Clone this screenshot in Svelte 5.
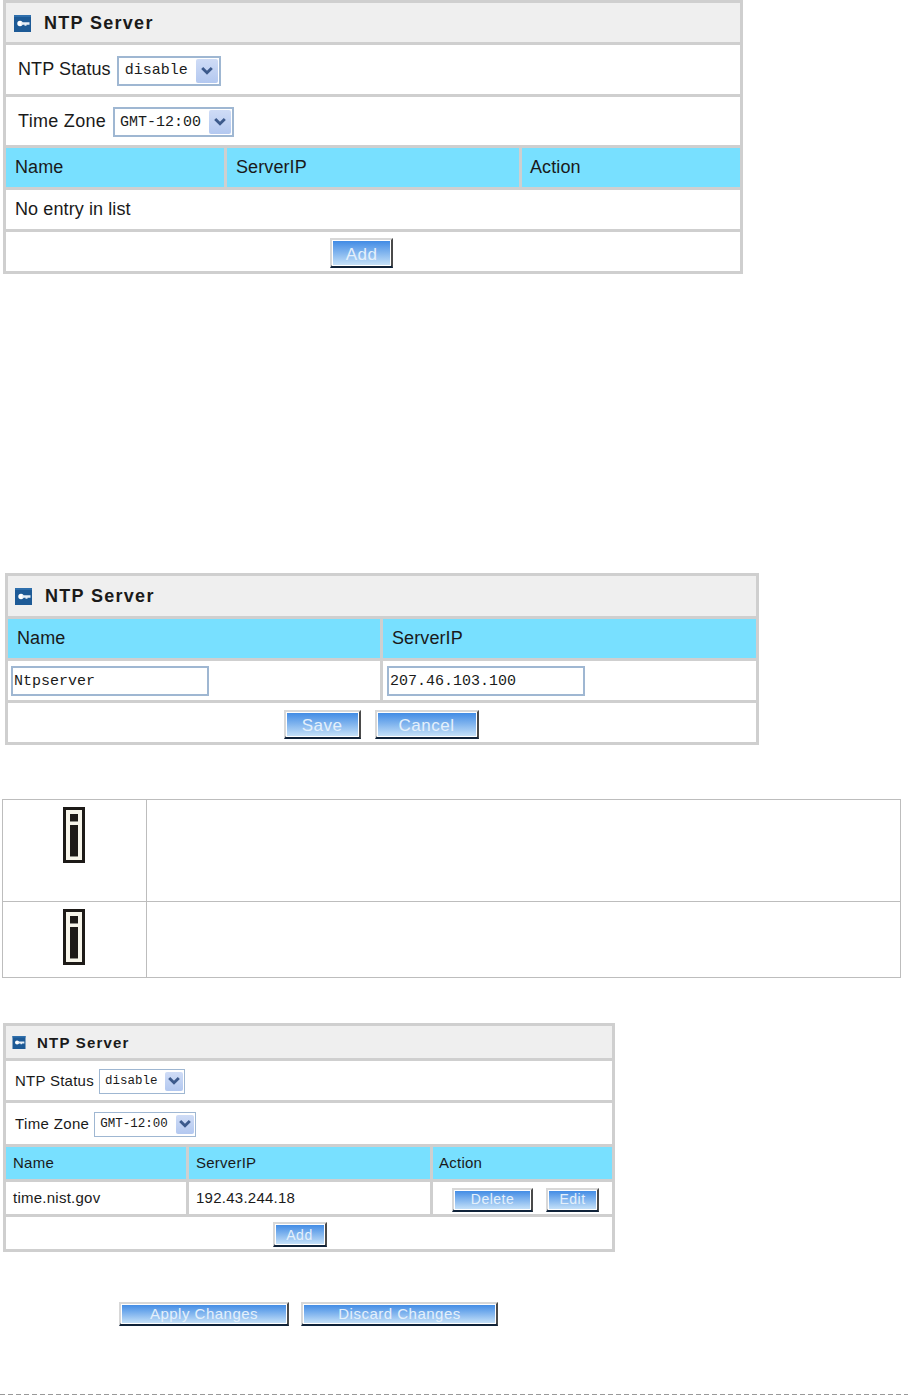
{#snippet logo(w, h)}
  <svg class="logo" width={w} height={h} viewBox="0 0 17 17">
    <rect width="17" height="17" fill="#1d5a96" />
    <rect width="17" height="2" fill="#2f6fac" />
    <circle cx="6" cy="8.500" r="2.700" fill="#fff" />
    <path d="M7 7.200h8.500v2.600h-3v1h-2v-1h-3.500z" fill="#e6eef6" />
  </svg>
{/snippet}

{#snippet selectBox(text)}
  <span class="select">
    <span class="value">{text}</span>
    <span class="arrow">
      <svg viewBox="0 0 10 8"><path d="M1 1.500l4 4 4-4" fill="none" stroke="#3c5a8c" stroke-width="2.400" /></svg>
    </span>
  </span>
{/snippet}

{#snippet info()}
  <svg class="info" width="22" height="56" viewBox="0 0 22 56">
    <rect x="1.500" y="1.500" width="19" height="53" fill="#f7f5ea" stroke="#1d1a17" stroke-width="3" />
    <rect x="7" y="7" width="8" height="8" fill="#8f8d86" />
    <rect x="7" y="7" width="8" height="7" fill="#1d1a17" />
    <rect x="7" y="18" width="8" height="32" fill="#8f8d86" />
    <rect x="7" y="18" width="8" height="31" fill="#1d1a17" />
  </svg>
{/snippet}

<div class="page">
  <section class="panel first">
    <div class="title">{@render logo(17, 17)}<span>NTP Server</span></div>
    <div class="row form status"><span>NTP Status</span>{@render selectBox('disable')}</div>
    <div class="row form zone"><span>Time Zone</span>{@render selectBox('GMT-12:00')}</div>
    <div class="row head cols-a">
      <div>Name</div>
      <div>ServerIP</div>
      <div>Action</div>
    </div>
    <div class="row plain">No entry in list</div>
    <div class="row buttons"><button class="add">Add</button></div>
  </section>

  <section class="panel second">
    <div class="title">{@render logo(17, 17)}<span>NTP Server</span></div>
    <div class="row head cols-b">
      <div>Name</div>
      <div>ServerIP</div>
    </div>
    <div class="row cols-b inputs">
      <div><span class="input">Ntpserver</span></div>
      <div><span class="input">207.46.103.100</span></div>
    </div>
    <div class="row buttons gap">
      <button class="save">Save</button>
      <button class="cancel">Cancel</button>
    </div>
  </section>

  <div class="notes">
    <div class="note tall">
      <div class="icon-cell">{@render info()}</div>
      <div></div>
    </div>
    <div class="note short">
      <div class="icon-cell">{@render info()}</div>
      <div></div>
    </div>
  </div>

  <section class="panel third">
    <div class="title">{@render logo(14, 13)}<span>NTP Server</span></div>
    <div class="row form status"><span>NTP Status</span>{@render selectBox('disable')}</div>
    <div class="row form zone"><span>Time Zone</span>{@render selectBox('GMT-12:00')}</div>
    <div class="row head cols-c">
      <div>Name</div>
      <div>ServerIP</div>
      <div>Action</div>
    </div>
    <div class="row cols-c entry">
      <div>time.nist.gov</div>
      <div>192.43.244.18</div>
      <div class="actions">
        <button class="delete">Delete</button>
        <button class="edit">Edit</button>
      </div>
    </div>
    <div class="row buttons"><button class="add">Add</button></div>
  </section>

  <div class="bottom">
    <button class="apply">Apply Changes</button>
    <button class="discard">Discard Changes</button>
  </div>

  <div class="dashed"></div>
</div>

<style>
  :global(body) {
    margin: 0;
    background: #fff;
  }
  .page {
    width: 908px;
    height: 1397px;
    overflow: hidden;
    font-family: "Liberation Sans", Arial, sans-serif;
    color: #1a1a1a;
  }
  .panel {
    box-sizing: border-box;
    border: 3px solid #cfcfcf;
    background: #fff;
    font-size: 18px;
    letter-spacing: 0.1px;
  }
  .first {
    width: 740px;
    height: 274px;
    margin-left: 3px;
  }
  .second {
    width: 754px;
    height: 172px;
    margin: 299px 0 0 5px;
  }
  .third {
    width: 612px;
    height: 229px;
    margin: 45px 0 0 3px;
    font-size: 15px;
    letter-spacing: 0.25px;
  }
  .title {
    display: flex;
    align-items: center;
    box-sizing: border-box;
    gap: 13px;
    height: 39px;
    padding: 1px 0 0 8px;
    background: #efefef;
    font-weight: bold;
    letter-spacing: 1.3px;
  }
  .second .title {
    height: 40px;
    padding-left: 7px;
  }
  .third .title {
    height: 32px;
    gap: 11px;
    padding-left: 6px;
    letter-spacing: 1.2px;
  }
  .logo {
    flex: none;
  }
  .row {
    border-top: 3px solid #cfcfcf;
    box-sizing: border-box;
  }
  .form {
    display: flex;
    align-items: center;
    padding-left: 12px;
    gap: 6px;
  }
  .first .status {
    height: 52px;
  }
  .first .zone {
    height: 51px;
    gap: 7px;
    letter-spacing: 0.3px;
  }
  .third .form {
    padding-left: 9px;
    gap: 5px;
  }
  .third .status {
    height: 42px;
  }
  .third .zone {
    height: 44px;
    letter-spacing: 0.35px;
  }
  .head {
    background: #78e0ff;
    height: 42px;
  }
  .third .head {
    height: 35px;
  }
  .cols-a,
  .cols-b,
  .cols-c {
    display: grid;
  }
  .cols-a {
    grid-template-columns: 218px 295px 1fr;
  }
  .cols-b {
    grid-template-columns: 372px 1fr;
  }
  .cols-c {
    grid-template-columns: 180px 244px 1fr;
  }
  .cols-a > div,
  .cols-b > div,
  .cols-c > div {
    display: flex;
    align-items: center;
    padding-left: 9px;
  }
  .cols-a > div:nth-child(3) {
    padding-left: 8px;
  }
  .third .cols-c > div {
    padding-left: 7px;
    padding-bottom: 1px;
  }
  .third .cols-c > div:nth-child(3) {
    padding-left: 6px;
  }
  .cols-a > div + div,
  .cols-b > div + div,
  .cols-c > div + div {
    border-left: 3px solid #cfcfcf;
  }
  .plain {
    display: flex;
    align-items: center;
    height: 42px;
    padding-left: 9px;
  }
  .inputs {
    height: 42px;
  }
  .cols-b.inputs > div {
    padding-left: 3px;
  }
  .cols-b.inputs > div + div {
    padding-left: 4px;
  }
  .entry {
    height: 35px;
  }
  .buttons {
    display: flex;
    justify-content: center;
    align-items: center;
    height: 42px;
    padding-top: 3px;
  }
  .first .buttons {
    padding-right: 23px;
  }
  .second .buttons {
    padding-right: 2px;
  }
  .third .buttons {
    height: 35px;
    padding-right: 19px;
  }
  .gap {
    gap: 14px;
  }
  .select {
    display: inline-flex;
    align-items: center;
    justify-content: space-between;
    box-sizing: border-box;
    height: 30px;
    margin-top: 2px;
    border: 2px solid #9fb7d2;
    padding: 0 1px 0 6px;
    background: #fff;
    font-family: "Liberation Mono", monospace;
    letter-spacing: 0;
  }
  .value {
    font-size: 15px;
    white-space: nowrap;
  }
  .status .select {
    width: 104px;
  }
  .zone .select {
    width: 121px;
    padding-left: 5px;
  }
  .third .select {
    height: 25px;
    margin-top: 1px;
    border-width: 1.500px;
    padding-left: 5px;
  }
  .third .status .select {
    width: 86px;
  }
  .third .zone .select {
    width: 102px;
  }
  .third .value {
    font-size: 12.500px;
  }
  .arrow {
    display: flex;
    align-items: center;
    justify-content: center;
    width: 22px;
    height: 24px;
    flex: none;
    border-radius: 2px;
    background: linear-gradient(#cfdcf6, #b3c8f0);
  }
  .third .arrow {
    width: 18px;
    height: 19px;
  }
  .arrow svg {
    width: 12px;
    height: 10px;
  }
  .input {
    display: flex;
    align-items: center;
    box-sizing: border-box;
    width: 198px;
    height: 30px;
    margin-top: 1px;
    border: 2px solid #9fb7d2;
    padding: 1px 0 0 1px;
    font-size: 15px;
    font-family: "Liberation Mono", monospace;
    letter-spacing: 0;
  }
  button {
    box-sizing: border-box;
    padding: 0 0 1px;
    border: 2px solid;
    border-color: #d8d8d8 #4a4a4a #10233a #d8d8d8;
    border-bottom-width: 3px;
    outline: 1px solid #fff;
    outline-offset: -3px;
    background: linear-gradient(#3c88e4, #c4e0f8);
    color: #e4f0fb;
    font-family: "Liberation Sans", Arial, sans-serif;
    font-size: 17px;
    letter-spacing: 0.5px;
    line-height: 1;
  }
  .first button,
  .second button {
    padding: 3px 0 0;
  }
  .add {
    width: 63px;
    height: 30px;
  }
  .save {
    width: 77px;
    height: 29px;
  }
  .cancel {
    width: 104px;
    height: 29px;
  }
  .third button {
    font-size: 14px;
  }
  .third .add {
    width: 54px;
    height: 25px;
    padding: 1px 0 0;
  }
  .actions {
    gap: 13px;
  }
  .third .cols-c > div.actions {
    padding: 3px 0 0 19px;
  }
  .delete {
    width: 81px;
    height: 24px;
  }
  .edit {
    width: 53px;
    height: 24px;
  }
  .notes {
    box-sizing: border-box;
    width: 899px;
    height: 179px;
    margin: 54px 0 0 2px;
    border: 1px solid #bdbdbd;
  }
  .note {
    display: grid;
    grid-template-columns: 143px 1fr;
  }
  .note > div + div {
    border-left: 1px solid #bdbdbd;
  }
  .tall {
    height: 101px;
    border-bottom: 1px solid #bdbdbd;
  }
  .short {
    height: 75px;
  }
  .icon-cell {
    display: flex;
    justify-content: center;
    padding: 7px 1px 0 0;
  }
  .bottom {
    display: flex;
    gap: 12px;
    margin: 50px 0 0 119px;
  }
  .bottom button {
    height: 24px;
    font-size: 15px;
  }
  .apply {
    width: 170px;
  }
  .discard {
    width: 197px;
  }
  .dashed {
    height: 1px;
    margin-top: 68px;
    background: repeating-linear-gradient(to right, #999 0 5px, transparent 5px 8px);
  }
</style>
